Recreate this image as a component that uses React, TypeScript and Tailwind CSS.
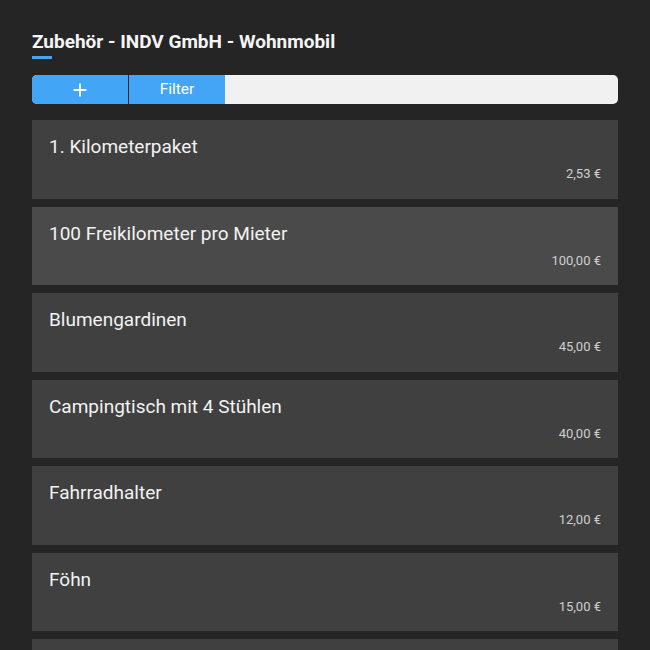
import React from "react";

const items = [
  { name: "1. Kilometerpaket", price: "2,53 €" },
  { name: "100 Freikilometer pro Mieter", price: "100,00 €", hover: true },
  { name: "Blumengardinen", price: "45,00 €" },
  { name: "Campingtisch mit 4 Stühlen", price: "40,00 €" },
  { name: "Fahrradhalter", price: "12,00 €" },
  { name: "Föhn", price: "15,00 €" },
  { name: "Gasflasche", price: "20,00 €" },
];

export default function App() {
  return (
    <div className="h-[650px] w-[650px] overflow-hidden bg-[#252525] px-[32px] pt-[30px] font-['Roboto',sans-serif]">
      <div className="w-fit">
        <h1 className="text-[19px] font-bold leading-[24px] text-[#f5f5f5]">
          Zubehör - INDV GmbH - Wohnmobil
        </h1>
        <div className="mt-[2px] h-[3px] w-[20px] bg-[#42a5f5]" />
      </div>
      <div className="mt-[16px] flex h-[29px] w-full overflow-hidden rounded-[5px] bg-[#f1f1f1]">
        <button className="flex w-[96px] items-center justify-center bg-[#42a5f5] text-white">
          <svg width="14" height="14" viewBox="0 0 14 14">
            <path d="M7 0.5v13M0.5 7h13" stroke="white" strokeWidth="2" />
          </svg>
        </button>
        <div className="w-[1px] bg-[#252525]" />
        <button className="flex w-[96px] items-center justify-center bg-[#42a5f5] text-[15.5px] text-white">
          Filter
        </button>
      </div>
      <div className="mt-[16px] flex flex-col gap-[8px]">
        {items.map((it) => (
          <div
            key={it.name}
            className={`h-[78.5px] shrink-0 px-[17px] pt-[16px] ${it.hover ? "bg-[#4a4a4a]" : "bg-[#404040]"}`}
          >
            <div className="text-[19px] leading-[22px] text-[#f2f2f2]">{it.name}</div>
            <div className="mt-[8px] text-right text-[13px] leading-[15px] text-[#cfcfcf]">{it.price}</div>
          </div>
        ))}
      </div>
    </div>
  );
}
